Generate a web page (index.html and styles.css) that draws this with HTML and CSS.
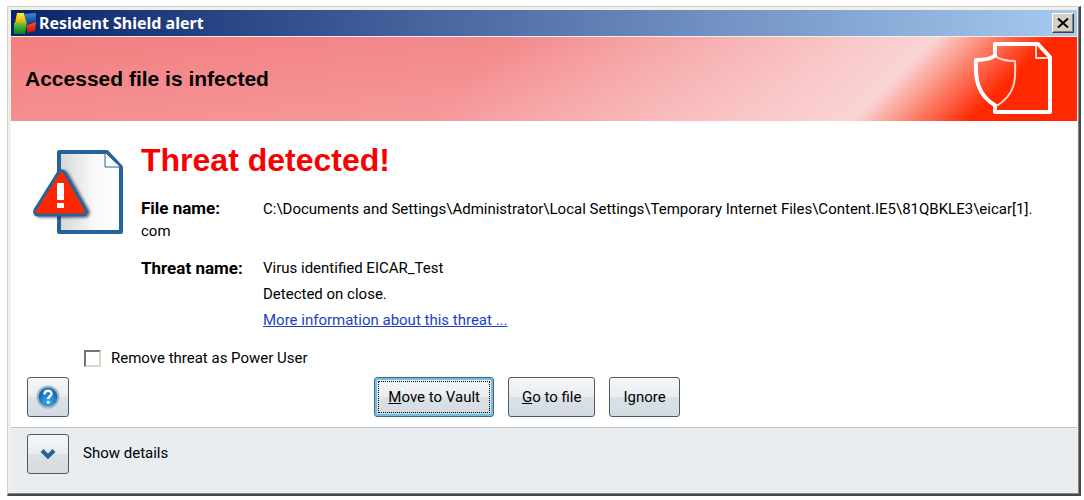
FILE: index.html
```html
<!DOCTYPE html>
<html lang="en">
<head>
<meta charset="utf-8">
<title>Resident Shield alert</title>
<link rel="stylesheet" href="styles.css">
</head>
<body>
<main class="window">
  <header class="titlebar">
    <svg class="app-icon" viewBox="0 0 24 24" aria-hidden="true">
      <defs>
        <linearGradient id="yellow" x2="0" y2="1"><stop stop-color="#fff03c"/><stop offset="1" stop-color="#e8a800"/></linearGradient>
        <linearGradient id="blue" x2="0" y2="1"><stop stop-color="#3f86dc"/><stop offset="1" stop-color="#123f92"/></linearGradient>
        <linearGradient id="green" x2="0" y2="1"><stop stop-color="#5ecb3c"/><stop offset="1" stop-color="#0b7d1e"/></linearGradient>
        <linearGradient id="red" x2="0" y2="1"><stop stop-color="#ff5a30"/><stop offset="1" stop-color="#c40a08"/></linearGradient>
      </defs>
      <path d="M4 2h7l3 10H2z" fill="url(#yellow)"/>
      <path d="M11 3l12-1v9l-9 2z" fill="url(#blue)"/>
      <path d="M1 12h13l-2 11H1z" fill="url(#green)"/>
      <path d="M14 14l9-3-1 9-8 2z" fill="url(#red)"/>
    </svg>
    <h1 class="title">Resident Shield alert</h1>
    <button class="close" type="button" aria-label="Close">
      <svg viewBox="0 0 12 10" aria-hidden="true"><path d="M1 0.5l10 9M11 0.5l-10 9"/></svg>
    </button>
  </header>

  <section class="banner">
    <h2 class="banner-text">Accessed file is infected</h2>
    <svg class="banner-icon" viewBox="0 0 80 76" aria-hidden="true">
      <path class="thick" d="M22 15V3h43l12 13v55H22v-8"/>
      <path class="fine" d="M63 4v13h12"/>
      <path class="fine" d="M22 15c5 4 13 5 20 5 1 18 1 34-20 46"/>
      <path class="thick" d="M23 14c-5 4-12 5-20 5C2 37 4 54 23 65"/>
    </svg>
  </section>

  <section class="content">
    <div class="threat">
      <svg class="threat-icon" viewBox="0 0 92 88" aria-hidden="true">
        <defs>
          <linearGradient id="paper" x2="1"><stop stop-color="#d5d5d8"/><stop offset=".55" stop-color="#f8f8fa"/><stop offset="1" stop-color="#fff"/></linearGradient>
          <filter id="shade" x="-20%" y="-20%" width="150%" height="150%"><feDropShadow dx="2" dy="1" stdDeviation="1.5" flood-opacity=".6"/></filter>
        </defs>
        <path d="M26 3h48l14 15v65H26z" fill="url(#paper)" stroke="#25649a" stroke-width="4" stroke-linejoin="round"/>
        <path d="M72 4v14h15" fill="#fff" stroke="#25649a"/>
        <path d="M25 24c2-3 5-3 7 0l21 37c1 2 0 5-3 5H5c-3 0-4-3-3-5z" fill="#ff2800" stroke="#25649a" stroke-width="3" filter="url(#shade)"/>
        <path d="M24 34h7v17h-7zM24 54h7v5h-7z" fill="#fff"/>
      </svg>
      <div class="details">
        <h2 class="headline">Threat detected!</h2>
        <p class="file"><strong class="label">File name:</strong>C:\Documents and Settings\Administrator\Local Settings\Temporary Internet Files\Content.IE5\81QBKLE3\eicar[1].<wbr>com</p>
        <div class="name">
          <strong class="label">Threat name:</strong>
          <div>
            <p>Virus identified EICAR_Test</p>
            <p>Detected on close.</p>
            <p><a href="#threat">More information about this threat ...</a></p>
          </div>
        </div>
      </div>
    </div>
    <label class="option"><input class="check" type="checkbox">Remove threat as Power User</label>
    <div class="actions">
      <button class="button square" type="button" aria-label="Help">
        <svg class="help-icon" viewBox="0 0 24 24" aria-hidden="true">
          <defs><radialGradient id="ball" cy=".75"><stop stop-color="#35b4ec"/><stop offset="1" stop-color="#176eb5"/></radialGradient></defs>
          <circle cx="12" cy="12" r="10.5" fill="url(#ball)" stroke="#a9b6c2" stroke-width="2"/>
          <path d="M8.500 9.500c0-5 7-4.500 7-.8 0 2.700-3.300 2.500-3.300 5.300" fill="none" stroke="#fff" stroke-width="2.500"/>
          <path d="M11 16h2.600v2.500H11z" fill="#fff"/>
        </svg>
      </button>
      <div class="choices">
        <button class="button primary" type="button"><span class="focus"><u>M</u>ove to Vault</span></button>
        <button class="button" type="button"><u>G</u>o to file</button>
        <button class="button" type="button">Ignore</button>
      </div>
    </div>
  </section>

  <footer class="footer">
    <button class="button square" type="button" id="expand" aria-label="Show details">
      <svg class="chevron" viewBox="0 0 16 12" aria-hidden="true"><path d="M2 2.500l6 6 6-6"/></svg>
    </button>
    <label for="expand">Show details</label>
  </footer>
</main>
</body>
</html>
```
FILE: styles.css
```css
* { box-sizing: border-box; }

body {
  margin: 0;
  padding: 6px 3px 4px 7px;
  background: #fff;
  color: #000;
  font: 15px/22px Roboto, "Liberation Sans", sans-serif;
}

h1, h2, p { margin: 0; }

.window {
  display: flex;
  flex-direction: column;
  min-height: calc(100vh - 10px);
  padding: 3px 2px 2px 3px;
  border: 1px solid #d4d0c8;
  border-right: 2px solid #484848;
  border-bottom: 2px solid #484848;
  background: #f1efe9;
  box-shadow: inset -1px -1px #858585;
}

.titlebar {
  display: flex;
  align-items: center;
  gap: 2px;
  height: 26px;
  margin-bottom: 1px;
  padding: 0 3px 0 2px;
  background: linear-gradient(90deg, #0a246a, #a6caf0);
}

.app-icon { width: 24px; height: 24px; }

.title {
  flex: 1;
  color: #fff;
  font: bold 16px/24px "Noto Sans", "Open Sans", sans-serif;
}

.close {
  display: flex;
  align-items: center;
  justify-content: center;
  width: 22px;
  height: 20px;
  padding: 0;
  border: 1px solid;
  border-color: #fff #404040 #404040 #fff;
  background: #d4d0c8;
  box-shadow: inset -1px -1px #808080;
}

.close svg { width: 12px; height: 10px; }
.close path { stroke: #000; stroke-width: 2; }

.banner {
  display: flex;
  align-items: center;
  justify-content: space-between;
  height: 84px;
  padding: 0 24px 0 14px;
  background:
    linear-gradient(135deg, transparent calc(100% - 460px), #fad4d4 calc(100% - 158px), #ff2800 calc(100% - 76px)),
    linear-gradient(174deg, #f27e80, #f8a6a8);
}

.banner-text { font: bold 21px/24px "Liberation Sans", sans-serif; }
.banner-icon { width: 80px; height: 76px; }
.banner-icon path { fill: none; stroke: #fff; stroke-linejoin: round; }
.banner-icon .thick { stroke-width: 4; }
.banner-icon .fine { stroke: #ffd8d0; stroke-width: 2; }

.content {
  flex: 1;
  padding: 23px 30px 9px 16px;
  background: #fff;
}

.threat { display: flex; gap: 16px; }

.threat-icon {
  flex: none;
  width: 92px;
  height: 88px;
  margin: 5px 0 0 6px;
}

.details { flex: 1; min-width: 0; }

.headline {
  margin-bottom: 21px;
  color: #f80000;
  font: bold 32px/32px "Liberation Sans", sans-serif;
}

.label { font-size: 17px; font-weight: bold; }
.file .label { display: inline-block; width: 122px; }

.name {
  display: grid;
  grid-template-columns: 122px 1fr;
  margin-top: 13px;
  line-height: 26px;
}

.name a { color: #1c3fc4; }

.option {
  display: flex;
  align-items: center;
  gap: 10px;
  width: fit-content;
  margin: 14px 0 8px 57px;
}

.check {
  appearance: none;
  width: 17px;
  height: 17px;
  margin: 0;
  border: 2px solid;
  border-color: #747474 #d8d5ce #d8d5ce #747474;
  background: #fff;
}

.actions {
  display: grid;
  grid-template-columns: 1fr auto 1fr;
  padding-right: 20px;
}

.choices { display: flex; gap: 14px; }

.button {
  height: 40px;
  padding: 0 13px;
  border: 1px solid #4e5966;
  border-radius: 3px;
  background: linear-gradient(#f5f7f9, #e9edf0 50%, #dbe1e6 51%, #d3dbe1);
  color: #000;
  font: inherit;
}

.square {
  display: flex;
  align-items: center;
  justify-content: center;
  width: 42px;
  padding: 0;
}

.primary {
  padding: 3px;
  border-color: #3c6c8c;
  box-shadow: inset 0 0 0 2px #72bde0;
}

.focus {
  display: flex;
  align-items: center;
  height: 32px;
  padding: 0 9px;
  border: 1px dotted #000;
}

.help-icon { width: 24px; height: 24px; }
.chevron { width: 16px; height: 12px; }
.chevron path { fill: none; stroke: #285f98; stroke-width: 4; }

.footer {
  display: flex;
  align-items: flex-start;
  gap: 14px;
  min-height: 64px;
  padding: 6px 16px 18px;
  border-top: 1px solid #b6bfc6;
  background: #e9edf0;
}

.footer label { padding-top: 8px; }
```
